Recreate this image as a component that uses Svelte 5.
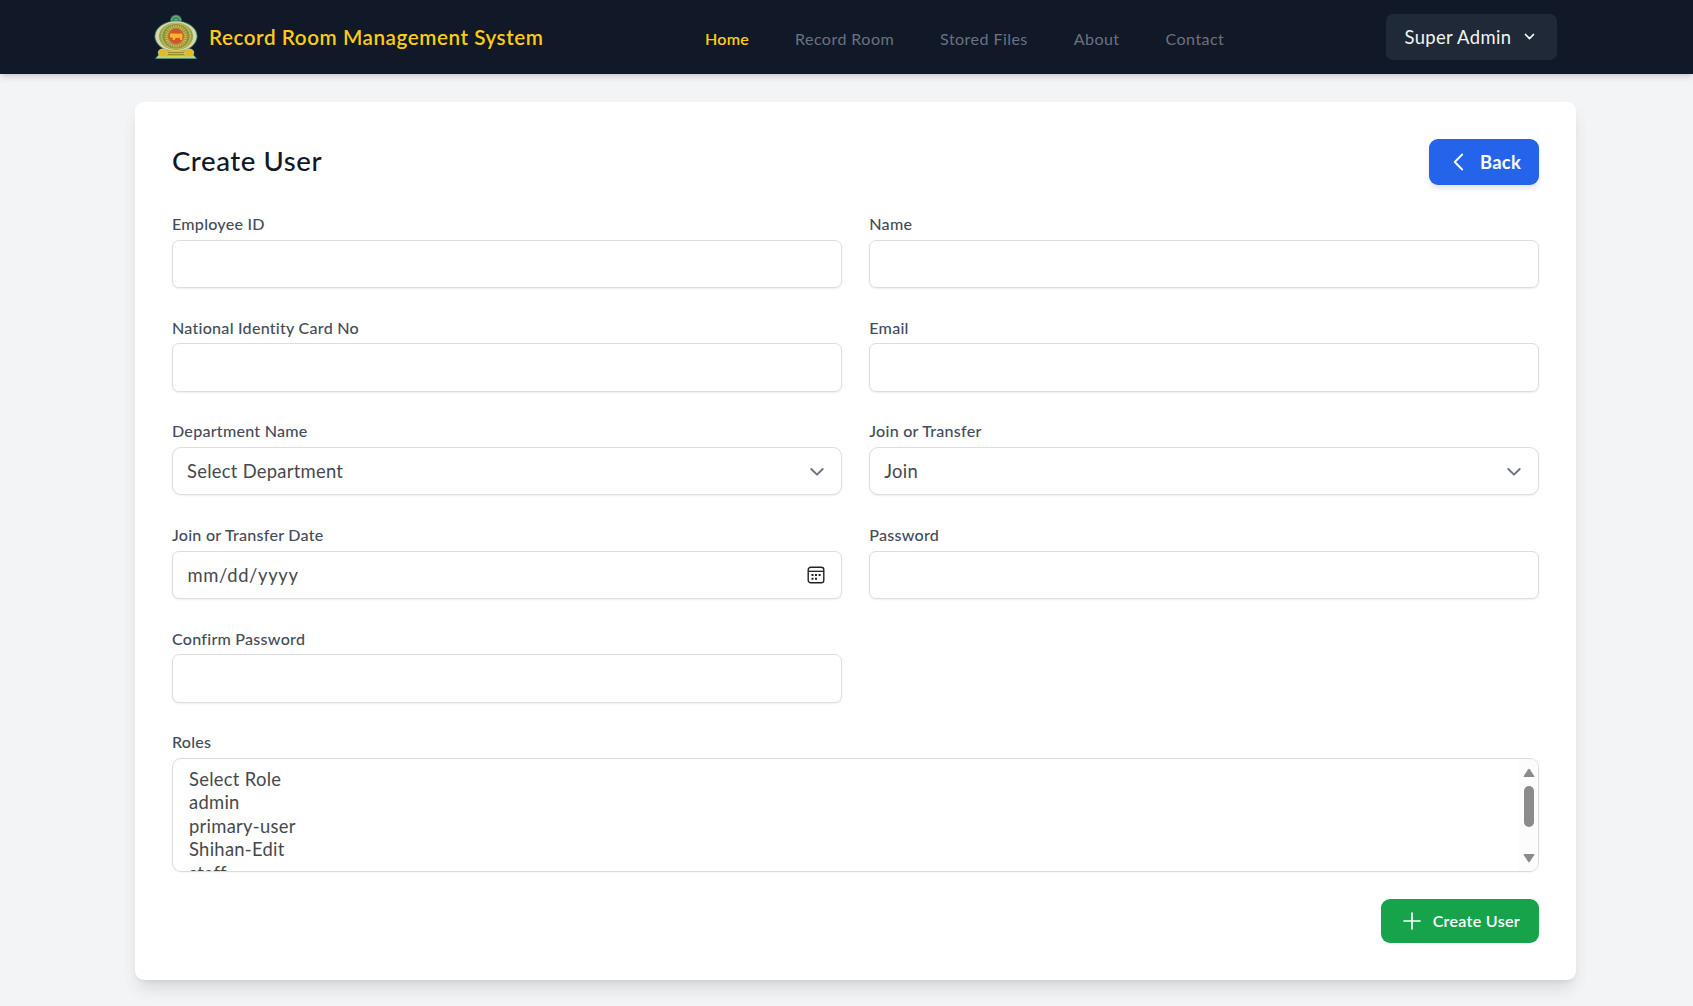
<script>
  const links = ['Home', 'Record Room', 'Stored Files', 'About', 'Contact'];
  const fields = [
    { label: 'Employee ID', type: 'text' },
    { label: 'Name', type: 'text' },
    { label: 'National Identity Card No', type: 'text' },
    { label: 'Email', type: 'text' },
    { label: 'Department Name', type: 'select', value: 'Select Department' },
    { label: 'Join or Transfer', type: 'select', value: 'Join' },
    { label: 'Join or Transfer Date', type: 'date', value: 'mm/dd/yyyy' },
    { label: 'Password', type: 'text' },
    { label: 'Confirm Password', type: 'text' }
  ];
  const roles = ['Select Role', 'admin', 'primary-user', 'Shihan-Edit', 'staff'];
  const petals = Array.from({ length: 28 }, (_, i) => (i * 360) / 28);
</script>

<nav class="nav">
  <div class="brand">
    <svg class="emblem" width="44" height="46" viewBox="0 0 44 46">
      <circle cx="22" cy="6.6" r="6" fill="#1d6670" />
      <circle cx="22" cy="6.6" r="4.6" fill="#3f8f59" stroke="#8eb889" stroke-width="1" />
      <circle cx="22" cy="6.6" r="1.8" fill="#7ba77a" />
      <path d="M1.500 44.500l3-3.400h35l3 3.400z" fill="#d9cf54" stroke="#4d8f88" stroke-width=".8" />
      <ellipse cx="22" cy="22.3" rx="21.6" ry="15.8" fill="#2b7079" />
      <ellipse cx="22" cy="22.3" rx="20.7" ry="15" fill="#dad7a0" />
      <ellipse cx="22" cy="22.3" rx="17" ry="13.6" fill="#8ba653" />
      <ellipse cx="22" cy="22.3" rx="15" ry="13.200" fill="#c9bb4a" />
      <ellipse cx="22" cy="22.3" rx="13.600" ry="12.200" fill="#82904a" />
      {#each petals as a}
        <ellipse cx="22" cy="12.6" rx=".75" ry="2.1" fill="#d3b548" transform="rotate({a} 22 22.3)" />
      {/each}
      <circle cx="22" cy="22.3" r="8.2" fill="#a8843a" />
      <circle cx="22" cy="22.3" r="7.200" fill="#d4532a" />
      <path d="M15.800 20.200c1-1.400 2.800-1.200 3.800-.6l5.600.2c1.500-.5 3.100 0 3.400 1.200l-.5 5h-1.900l-.5-2.200-4.200.1-.9 2.100h-2l.1-2.600-2.600.4z" fill="#f5b62c" />
      <path d="M12.500 36.500h19v5h-19z" fill="#d8bd35" />
      <path d="M14 38.500h16M14 40.500h16" stroke="#8c7d24" stroke-width=".8" />
      <ellipse cx="9" cy="38.700" rx="5.200" ry="4.200" fill="#b9c883" />
      <ellipse cx="9" cy="38.700" rx="3.900" ry="3.100" fill="#e3b91f" />
      <ellipse cx="35" cy="38.700" rx="5.200" ry="4.200" fill="#b9c883" />
      <ellipse cx="35" cy="38.700" rx="3.900" ry="3.100" fill="#e3b91f" />
    </svg>
    <span class="brand-name">Record Room Management System</span>
  </div>
  <div class="links">
    {#each links as link, i}
      <span class="link" class:active={i === 0}>{link}</span>
    {/each}
  </div>
  <div class="account">
    <span class="account-name">Super Admin</span>
    <svg width="11" height="8" viewBox="0 0 11 8"><path d="M1.500 1.500l4 4 4-4" fill="none" stroke="#fff" stroke-width="1.700" stroke-linecap="round" /></svg>
  </div>
</nav>

<main class="card">
  <header class="head">
    <h1>Create User</h1>
    <div class="back">
      <svg width="12" height="18" viewBox="0 0 12 18"><path d="M9.200 1.500L1.700 9l7.500 7.500" fill="none" stroke="#fff" stroke-width="1.800" stroke-linecap="round" stroke-linejoin="round" /></svg>
      <span>Back</span>
    </div>
  </header>

  <div class="grid">
    {#each fields as field}
      <div class="field">
        <span class="label">{field.label}</span>
        <div class="control {field.type}">
          {#if field.value}<span class="value">{field.value}</span>{/if}
          {#if field.type === 'select'}
            <svg class="chevron" width="16" height="10" viewBox="0 0 16 10"><path d="M2.300 2l5.700 5.700L13.700 2" fill="none" stroke="#6b7280" stroke-width="1.900" stroke-linecap="round" stroke-linejoin="round" /></svg>
          {:else if field.type === 'date'}
            <svg width="18" height="18" viewBox="0 0 18 18">
              <rect x="1.200" y="1.200" width="15.600" height="15.600" rx="2.600" fill="none" stroke="#222" stroke-width="1.400" />
              <path d="M1.500 5.300h15" stroke="#222" stroke-width="1.300" />
              <path d="M4.500 8h2v2h-2zM8 8h2v2H8zM11.600 8h2v2h-2zM4.500 11.700h2v2h-2zM8 11.700h2v2H8z" fill="#222" />
            </svg>
          {/if}
        </div>
      </div>
    {/each}
  </div>

  <div class="field roles-field">
    <span class="label">Roles</span>
    <div class="roles">
      <div class="options">
        {#each roles as role}
          <div class="option">{role}</div>
        {/each}
      </div>
      <div class="scrollbar">
        <svg width="12" height="10" viewBox="0 0 12 10"><path d="M5.200 1.200Q6 .2 6.800 1.200L11.300 8Q11.700 9 10.700 9H1.300Q.3 9 .7 8z" fill="#8b8b8b" /></svg>
        <div class="thumb"></div>
        <svg class="down" width="12" height="10" viewBox="0 0 12 10"><path d="M5.200 8.800Q6 9.800 6.800 8.800L11.300 2Q11.700 1 10.700 1H1.300Q.3 1 .7 2z" fill="#8b8b8b" /></svg>
      </div>
    </div>
  </div>

  <footer class="foot">
    <div class="create">
      <svg width="18" height="18" viewBox="0 0 18 18"><path d="M9 1v16M1 9h16" stroke="#fff" stroke-width="1.700" stroke-linecap="round" /></svg>
      <span>Create User</span>
    </div>
  </footer>
</main>

<style>
  :global(body) {
    min-height: 100vh;
    background: #f3f4f6;
    font-family: Lato, 'Liberation Sans', sans-serif;
  }
  .nav {
    box-sizing: border-box;
    height: 73.700px;
    display: flex;
    align-items: center;
    background: #111827;
    box-shadow: 0 4px 7px -1px rgba(0, 0, 0, 0.13), 0 2px 4px -2px rgba(0, 0, 0, 0.12);
    padding: 0 136px 0 154px;
    white-space: nowrap;
  }
  .brand {
    width: 551px;
    display: flex;
    align-items: center;
    gap: 11px;
  }
  .emblem { flex: none; }
  .brand-name {
    font-size: 20.700px;
    font-weight: 600;
    letter-spacing: 0.53px;
    color: #facc15;
  }
  .links {
    display: flex;
    align-items: center;
    gap: 46px;
    padding-top: 3px;
    font-size: 16.100px;
    font-weight: 400;
    color: #6b7280;
    letter-spacing: 0.42px;
  }
  .link.active { color: #facc15; font-weight: 600; letter-spacing: 0.2px; }
  .account {
    box-sizing: border-box;
    margin-left: auto;
    width: 171px;
    height: 46px;
    padding: 0 22px 0 18.500px;
    border-radius: 7px;
    background: #1f2937;
    color: #f3f4f6;
    display: flex;
    align-items: center;
    justify-content: space-between;
    font-size: 18.400px;
    letter-spacing: 0.36px;
  }
  .card {
    box-sizing: border-box;
    width: 1441px;
    height: 878px;
    margin: 28px 0 0 135px;
    padding: 37px 37px 0;
    border-radius: 9px;
    background: #fff;
    box-shadow: 0 11px 17px -3px rgba(0, 0, 0, 0.11), 0 4px 7px -4px rgba(0, 0, 0, 0.11);
  }
  .head {
    height: 46px;
    display: flex;
    align-items: center;
    justify-content: space-between;
  }
  h1 {
    margin: 0;
    padding-bottom: 2px;
    font-size: 27.600px;
    line-height: 37px;
    font-weight: 500;
    letter-spacing: 0.55px;
    color: #111827;
  }
  .back {
    box-sizing: border-box;
    width: 110px;
    height: 46px;
    padding: 0 18px 0 23.500px;
    display: flex;
    align-items: center;
    justify-content: space-between;
    border-radius: 9px;
    background: #2563eb;
    color: #fff;
    font-size: 18.400px;
    font-weight: 700;
    letter-spacing: 0.25px;
    box-shadow: 0 4px 6px -1px rgba(0, 0, 0, 0.13);
  }
  .grid {
    margin-top: 27.600px;
    display: grid;
    grid-template-columns: 1fr 1fr;
    gap: 27.600px;
  }
  .field {
    display: flex;
    flex-direction: column;
    gap: 4.600px;
  }
  .label {
    height: 23px;
    line-height: 23px;
    font-size: 16.100px;
    font-weight: 500;
    letter-spacing: 0.24px;
    color: #434c5a;
  }
  .control {
    box-sizing: border-box;
    height: 48.400px;
    border: 1px solid #dcdee2;
    border-radius: 7px;
    background: #fff;
    box-shadow: 0 1px 2px rgba(0, 0, 0, 0.07);
    display: flex;
    align-items: center;
    justify-content: space-between;
    padding: 0 16px 0 14px;
    font-size: 18.400px;
    letter-spacing: 0.27px;
    color: #46484c;
  }
  .control.select { border-radius: 9px; }
  .control.date { letter-spacing: 0.66px; padding-left: 14.500px; }
  .chevron { margin-top: 1px; }
  .roles-field { margin-top: 27.600px; }
  .roles {
    box-sizing: border-box;
    height: 114px;
    border: 1px solid #d8dbe0;
    border-radius: 9px;
    display: flex;
    justify-content: space-between;
    overflow: hidden;
    box-shadow: 0 1px 2px rgba(0, 0, 0, 0.04);
  }
  .options {
    padding: 9px 0 0 16px;
    font-size: 18.400px;
    letter-spacing: 0.28px;
    color: #46484c;
  }
  .option { height: 23.500px; line-height: 23.500px; }
  .scrollbar {
    box-sizing: border-box;
    width: 19px;
    background: #fcfcfc;
    padding: 9px 1px 8px 2px;
    display: flex;
    flex-direction: column;
    align-items: center;
  }
  .thumb {
    width: 10px;
    height: 41px;
    margin-top: 8px;
    border-radius: 5px;
    background: #8b8b8b;
  }
  .down { margin-top: auto; }
  .foot {
    margin-top: 27.500px;
    display: flex;
    justify-content: flex-end;
  }
  .create {
    box-sizing: border-box;
    width: 158px;
    height: 43.500px;
    padding: 0 19px 1px 21.500px;
    display: flex;
    align-items: center;
    justify-content: space-between;
    border-radius: 9px;
    background: #16a34a;
    color: #fff;
    font-size: 16.100px;
    font-weight: 600;
    letter-spacing: 0.28px;
  }
</style>
